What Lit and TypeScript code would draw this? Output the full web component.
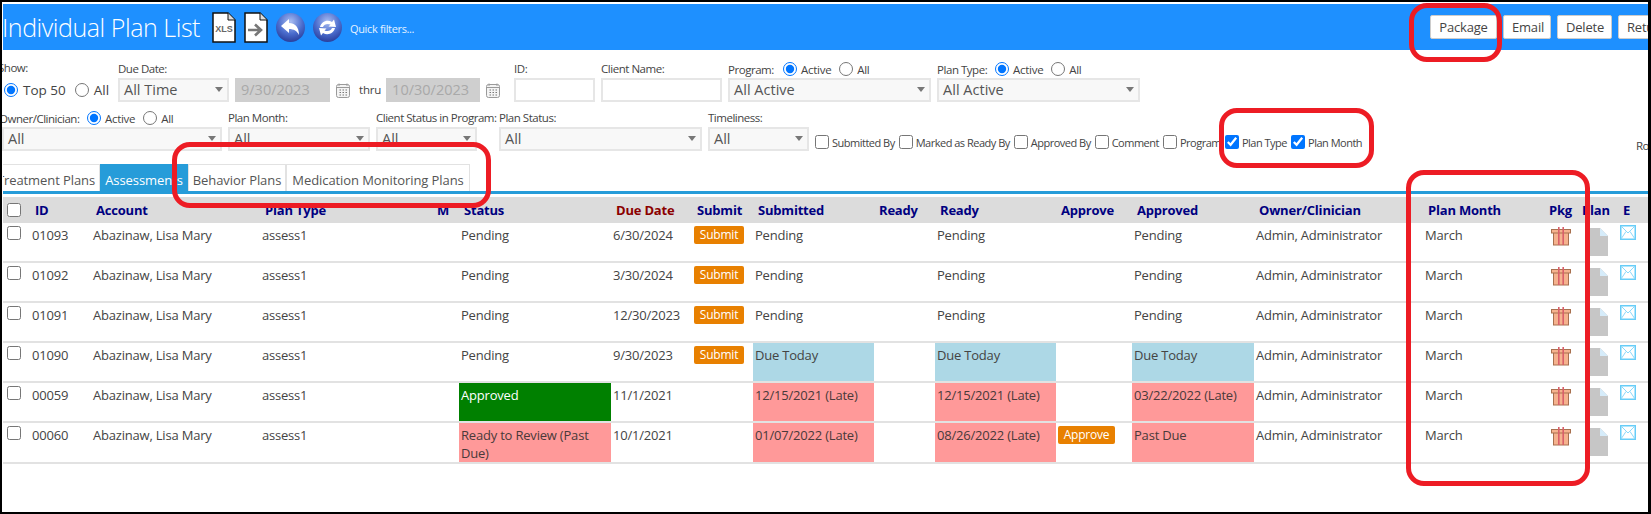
import { LitElement, html, css, svg } from 'lit';
import { customElement } from 'lit/decorators.js';

const giftIcon = svg`<svg class="gift" width="20" height="20" viewBox="0 0 20 20">
  <rect x="2.5" y="6.5" width="15" height="12.5" fill="#f5b28e" stroke="#a8704f"/>
  <rect x="0.5" y="3.5" width="19" height="3.5" fill="#f5b28e" stroke="#a8704f"/>
  <rect x="7" y="1" width="1.6" height="18" fill="#d9606a"/>
  <rect x="11.4" y="1" width="1.6" height="18" fill="#d9606a"/>
</svg>`;

const planIcon = svg`<svg class="doc" width="22" height="28" viewBox="0 0 22 28">
  <path d="M0 0H14L22 8V28H0Z" fill="#c6c6c6"/>
  <path d="M14 0L22 8H14Z" fill="#d6ecfa"/>
</svg>`;

const mailIcon = svg`<svg class="mail" width="16" height="15" viewBox="0 0 16 15">
  <rect x="0.75" y="0.75" width="14.5" height="13.5" fill="#fff" stroke="#67cdf8" stroke-width="1.5"/>
  <path d="M1 1L8 8L15 1M1 14L6 6.5M15 14L10 6.5" fill="none" stroke="#8bd9fa"/>
</svg>`;

const calendarIcon = svg`<svg class="cal" width="14" height="15" viewBox="0 0 14 15">
  <rect x="0.5" y="1.5" width="13" height="13" rx="2" fill="#f4f4f4" stroke="#9a9a9a"/>
  <path d="M3 0.5V3M11 0.5V3M1 4.5H13" stroke="#9a9a9a"/>
  <path d="M3.5 7H5M6.5 7H8M9.5 7H11M3.5 9.5H5M6.5 9.5H8M9.5 9.5H11M3.5 12H5M6.5 12H8M9.5 12H11" stroke="#777"/>
</svg>`;

const xlsIcon = svg`<svg width="24" height="31" viewBox="0 0 24 31">
  <path d="M1 1H16L23 8V30H1Z" fill="#fff" stroke="#111" stroke-width="1.5"/>
  <path d="M16 1V8H23" fill="#ddd" stroke="#111"/>
  <text x="12" y="20" text-anchor="middle" font-family="Liberation Sans, sans-serif" font-size="9" font-weight="700" fill="#666">XLS</text>
</svg>`;

const exportIcon = svg`<svg width="24" height="31" viewBox="0 0 24 31">
  <path d="M1 1H16L23 8V30H1Z" fill="#fff" stroke="#111" stroke-width="1.5"/>
  <path d="M16 1V8H23" fill="#ddd" stroke="#111"/>
  <path d="M4 18H15M11 12.5L17 18L11 23.5" fill="none" stroke="#777" stroke-width="2.6"/>
</svg>`;

const orbDefs = svg`<defs><radialGradient id="orb" cx="50%" cy="30%" r="70%">
  <stop offset="0" stop-color="#a9bdf2"/><stop offset="0.6" stop-color="#4a6ccd"/><stop offset="1" stop-color="#2a3f9c"/>
</radialGradient></defs>`;

const backIcon = svg`<svg width="29" height="29" viewBox="0 0 29 29">${orbDefs}
  <circle cx="14.5" cy="14.5" r="14.5" fill="url(#orb)"/>
  <path d="M5 13L13 6V10C19 10 23 14 23 22C21 18 18 16 13 16V20Z" fill="#fff"/>
</svg>`;

const refreshIcon = svg`<svg width="29" height="29" viewBox="0 0 29 29">
  <circle cx="14.5" cy="14.5" r="14.5" fill="url(#orb)"/>
  <path d="M7 14C8 9 14 6 19 9L21 6.5L23 14L15.5 13.5L17.5 11.5C14 10 11 11.5 10 14Z" fill="#fff"/>
  <path d="M22 15C21 20 15 23 10 20L8 22.5L6 15L13.5 15.5L11.5 17.5C15 19 18 17.5 19 15Z" fill="#fff"/>
</svg>`;

interface PlanRow {
  id: string;
  due: string;
  status: string;
  statusClass?: string;
  canSubmit?: boolean;
  canApprove?: boolean;
  submitted: string;
  ready: string;
  approved: string;
  approvedClass?: string;
  submittedClass?: string;
  readyClass?: string;
}

const rows: PlanRow[] = [
  { id: '01093', due: '6/30/2024', status: 'Pending', canSubmit: true, submitted: 'Pending', ready: 'Pending', approved: 'Pending' },
  { id: '01092', due: '3/30/2024', status: 'Pending', canSubmit: true, submitted: 'Pending', ready: 'Pending', approved: 'Pending' },
  { id: '01091', due: '12/30/2023', status: 'Pending', canSubmit: true, submitted: 'Pending', ready: 'Pending', approved: 'Pending' },
  { id: '01090', due: '9/30/2023', status: 'Pending', canSubmit: true, submitted: 'Due Today', ready: 'Due Today', approved: 'Due Today', submittedClass: 'today', readyClass: 'today', approvedClass: 'today' },
  { id: '00059', due: '11/1/2021', status: 'Approved', statusClass: 'ok', submitted: '12/15/2021 (Late)', ready: '12/15/2021 (Late)', approved: '03/22/2022 (Late)', submittedClass: 'late', readyClass: 'late', approvedClass: 'late' },
  { id: '00060', due: '10/1/2021', status: 'Ready to Review (Past Due)', statusClass: 'late', canApprove: true, submitted: '01/07/2022 (Late)', ready: '08/26/2022 (Late)', approved: 'Past Due', submittedClass: 'late', readyClass: 'late', approvedClass: 'late' },
];

const columns = ['check', 'id', 'account', 'type', 'm', 'status', 'due', 'submit', 'submitted', 'ready1', 'ready2', 'approve', 'approved', 'owner', 'month', 'pkg', 'plan', 'email'];

@customElement('app-root')
export class AppRoot extends LitElement {
  static styles = css`
    :host {
      display: block;
      position: relative;
      width: 1651px;
      height: 514px;
      font-family: "Open Sans", "Noto Sans", sans-serif;
      color: #444;
      background: #000;
    }

    .Frame {
      box-sizing: border-box;
      position: absolute;
      left: 2px;
      top: 2px;
      width: 1646px;
      height: 510px;
      background: #fff;
      overflow: hidden;
    }

    .Head {
      display: flex;
      align-items: center;
      height: 46px;
      margin: 2px 0 0 1px;
      background: #1e90ff;
    }

    .Head-left {
      flex: 0 0 1427px;
      display: flex;
      align-items: center;
    }

    .Title {
      margin: 0 0 0 -1px;
      width: 210px;
      font-size: 25px;
      font-weight: 300;
      letter-spacing: -0.45px;
      color: #fff;
      white-space: nowrap;
    }

    .Icons {
      display: flex;
      align-items: center;
      gap: 8px;
      margin-right: 8px;
    }

    .Icons svg { display: block; }

    .Quick {
      font-size: 11px;
      letter-spacing: -0.35px;
      color: #e3f1ff;
      padding-top: 3px;
    }

    .Actions {
      display: flex;
      gap: 6px;
      flex: none;
    }

    .Btn {
      box-sizing: border-box;
      height: 24px;
      padding: 0 8px;
      background: #fff;
      border: 1px solid #ccc;
      border-radius: 2px;
      font: 13px "Open Sans", sans-serif;
      letter-spacing: -0.2px;
      color: #444;
    }

    .Package { width: 67px; }
    .Email { width: 48px; }
    .Delete { width: 55px; }
    .Return { width: 70px; text-align: left; }

    .Filters {
      height: 114px;
      padding-top: 10px;
      box-sizing: border-box;
      font-size: 11.5px;
      letter-spacing: -0.48px;
    }

    .Line {
      display: flex;
      align-items: flex-end;
      gap: 6px;
      height: 42px;
    }

    .Line + .Line { margin-top: 7px; }

    .Field {
      display: flex;
      flex-direction: column;
      gap: 1px;
    }

    .Field > label, .Cap {
      line-height: 16px;
      white-space: nowrap;
      color: #444;
    }

    .Show { width: 108px; margin-left: 2px; }
    .Show > label { margin-left: -6px; margin-bottom: 1px; }
    .Show .Top { font-size: 13.5px; letter-spacing: 0; }

    .Radios {
      display: flex;
      align-items: center;
      gap: 5px;
      height: 24px;
      white-space: nowrap;
    }

    .Cap-row {
      display: flex;
      align-items: center;
      height: 16px;
      gap: 4px;
      white-space: nowrap;
      letter-spacing: -0.3px;
    }

    .Cap-row label { flex: none; margin-right: 1px; letter-spacing: -0.48px; }
    .Cap-program { width: 50px; }
    .Cap-type { width: 53px; }
    .Cap-owner { width: 83px; margin-left: -3px; }

    input[type="radio"] {
      width: 14px;
      height: 14px;
      margin: 0;
      flex: none;
    }

    input[type="radio"] + span { margin-right: 4px; }

    .Select, .Text {
      box-sizing: border-box;
      height: 24px;
      border: 2px solid #e6e6e6;
      background: #f8f8f8;
      font-size: 14.5px;
      letter-spacing: 0;
      line-height: 20px;
      padding-left: 4px;
      color: #555;
      position: relative;
    }

    .Select::after {
      content: "";
      position: absolute;
      right: 4px;
      top: 7px;
      border-left: 4px solid transparent;
      border-right: 4px solid transparent;
      border-top: 5px solid #777;
    }

    .Text { background: #fff; }
    .Off { background: #cfcfcf; border-color: #cfcfcf; color: #a9a9a9; padding-left: 4px; }

    .w111 { width: 111px; }
    .w95 { width: 95px; }
    .w94 { width: 94px; }
    .w81 { width: 81px; }
    .w121 { width: 121px; }
    .w203 { width: 203px; }
    .w220 { width: 220px; }
    .w142 { width: 142px; }
    .w101 { width: 101px; }

    .Cal { padding-bottom: 4px; }
    .cal { display: block; }
    .Thru { margin: 0 -1px 4px 3px; line-height: 16px; letter-spacing: -0.2px; }
    .IdField { margin-left: 8px; }

    .ClientStatus { width: 117px; }

    .Checks {
      display: flex;
      align-items: center;
      gap: 3px;
      height: 24px;
      margin: 0 0 -3px -1px;
      white-space: nowrap;
      font-size: 11px;
      letter-spacing: -0.5px;
    }

    .Checks input {
      width: 14px;
      height: 14px;
      margin: 0 0 0 1px;
      flex: none;
    }

    .Rows {
      position: absolute;
      left: 1634px;
      top: 136px;
      font-size: 11.5px;
    }

    .Tabs {
      display: flex;
      height: 27px;
      margin-left: 1px;
      border-bottom: 3px solid #269cd9;
    }

    .Tab {
      box-sizing: border-box;
      height: 27px;
      padding-top: 2px;
      line-height: 27px;
      text-align: center;
      font-size: 13px;
      letter-spacing: -0.08px;
      white-space: nowrap;
      background: #fff;
      border: 1px solid #e2e2e2;
      border-bottom: none;
      color: #555;
      overflow: hidden;
    }

    .Tab-t { width: 97px; border-left: none; text-indent: -10px; }
    .Tab-a { width: 88px; background: #269cd9; border-color: #269cd9; color: #fff; }
    .Tab-b { width: 98px; }
    .Tab-m { width: 184px; }

    table {
      margin: 3px 0 0 1px;
      width: 1645px;
      table-layout: fixed;
      border-collapse: collapse;
      font-size: 13px;
      letter-spacing: -0.2px;
    }

    col.check { width: 27px; }
    col.id { width: 61px; }
    col.account { width: 169px; }
    col.type { width: 172px; }
    col.m { width: 27px; }
    col.status { width: 152px; }
    col.due { width: 81px; }
    col.submit { width: 61px; }
    col.submitted { width: 121px; }
    col.ready1 { width: 61px; }
    col.ready2 { width: 121px; }
    col.approve { width: 76px; }
    col.approved { width: 122px; }
    col.owner { width: 169px; }
    col.month { width: 124px; }
    col.pkg { width: 35px; }
    col.plan { width: 36px; }
    col.email { width: 30px; }

    th {
      height: 26px;
      padding: 0 0 0 5px;
      background: #dcdcdc;
      color: #000080;
      font-size: 13px;
      font-weight: 700;
      text-align: left;
      white-space: nowrap;
      overflow: hidden;
    }

    th.Due-head { color: #8b0000; }
    th.Tight { padding-left: 2px; }
    th.Flush { padding-left: 0; }

    td {
      padding: 3px 2px 0;
      box-sizing: content-box;
      vertical-align: top;
      line-height: 19px;
      border-bottom: 2px solid #e2e2e2;
      color: #444;
      overflow: hidden;
    }

    tbody tr td { height: 35px; }
    tr.Tall td { line-height: 18px; height: 36px; }

    td.NoPad { padding-left: 0; padding-right: 0; }
    td input { width: 14px; height: 14px; margin: 0 0 0 4px; display: block; }

    td.today { background: #add8e6; }
    td.late { background: #ff9999; color: #4a3a3a; }
    td.ok { background: #008000; color: #fff; }

    .Act {
      display: block;
      box-sizing: border-box;
      height: 18px;
      padding: 0;
      border: none;
      border-radius: 2px;
      background: #e88000;
      color: #fff;
      font: 12px/18px "Open Sans", sans-serif;
      letter-spacing: -0.2px;
      white-space: nowrap;
    }

    .Sub { width: 50px; }
    .App { width: 57px; }

    th input { width: 14px; height: 14px; margin: 0 0 0 2px; display: block; }

    td svg { display: block; }
    .gift { margin: 0 0 0 4px; }
    .doc { margin: 2px 0 0 4px; }
    .mail { margin: -1px 0 0 2px; }

    .Mark {
      position: absolute;
      box-sizing: border-box;
      border: 5px solid #ed1c24;
      border-radius: 18px;
      pointer-events: none;
    }

    .Mark-package { left: 1409px; top: 3px; width: 93px; height: 59px; }
    .Mark-tabs { left: 172px; top: 142px; width: 319px; height: 66px; }
    .Mark-checks { left: 1219px; top: 108px; width: 155px; height: 60px; }
    .Mark-month { left: 1406px; top: 170px; width: 184px; height: 316px; }
  `;

  private renderRow(row: PlanRow) {
    return html`
      <tr class=${row.id === '00060' ? 'Tall' : ''}>
        <td class="NoPad"><input type="checkbox" /></td>
        <td>${row.id}</td>
        <td>Abazinaw, Lisa Mary</td>
        <td>assess1</td>
        <td></td>
        <td class=${row.statusClass ?? ''}>${row.status}</td>
        <td>${row.due}</td>
        <td>${row.canSubmit ? html`<button class="Act Sub">Submit</button>` : ''}</td>
        <td class=${row.submittedClass ?? ''}>${row.submitted}</td>
        <td></td>
        <td class=${row.readyClass ?? ''}>${row.ready}</td>
        <td>${row.canApprove ? html`<button class="Act App">Approve</button>` : ''}</td>
        <td class=${row.approvedClass ?? ''}>${row.approved}</td>
        <td>Admin, Administrator</td>
        <td>March</td>
        <td class="NoPad">${giftIcon}</td>
        <td class="NoPad">${planIcon}</td>
        <td class="NoPad">${mailIcon}</td>
      </tr>
    `;
  }

  render() {
    return html`
      <div class="Frame">
        <header class="Head">
          <div class="Head-left">
            <h1 class="Title">Individual Plan List</h1>
            <div class="Icons">
              ${xlsIcon}${exportIcon}${backIcon}${refreshIcon}
            </div>
            <span class="Quick">Quick filters...</span>
          </div>
          <div class="Actions">
            <button class="Btn Package">Package</button>
            <button class="Btn Email">Email</button>
            <button class="Btn Delete">Delete</button>
            <button class="Btn Return">Return</button>
          </div>
        </header>

        <section class="Filters">
          <div class="Line">
            <div class="Field Show">
              <label>Show:</label>
              <div class="Radios Top">
                <input type="radio" name="show" checked /><span>Top 50</span>
                <input type="radio" name="show" /><span>All</span>
              </div>
            </div>
            <div class="Field"><label>Due Date:</label><div class="Select w111">All Time</div></div>
            <div class="Text Off w95">9/30/2023</div>
            <div class="Cal">${calendarIcon}</div>
            <span class="Thru">thru</span>
            <div class="Text Off w94">10/30/2023</div>
            <div class="Cal">${calendarIcon}</div>
            <div class="Field IdField"><label>ID:</label><div class="Text w81"></div></div>
            <div class="Field"><label>Client Name:</label><div class="Text w121"></div></div>
            <div class="Field">
              <div class="Cap-row">
                <label class="Cap-program">Program:</label>
                <input type="radio" name="program" checked /><span>Active</span>
                <input type="radio" name="program" /><span>All</span>
              </div>
              <div class="Select w203">All Active</div>
            </div>
            <div class="Field">
              <div class="Cap-row">
                <label class="Cap-type">Plan Type:</label>
                <input type="radio" name="type" checked /><span>Active</span>
                <input type="radio" name="type" /><span>All</span>
              </div>
              <div class="Select w203">All Active</div>
            </div>
          </div>

          <div class="Line">
            <div class="Field">
              <div class="Cap-row">
                <label class="Cap-owner">Owner/Clinician:</label>
                <input type="radio" name="owner" checked /><span>Active</span>
                <input type="radio" name="owner" /><span>All</span>
              </div>
              <div class="Select w220">All</div>
            </div>
            <div class="Field"><label>Plan Month:</label><div class="Select w142">All</div></div>
            <div class="Field ClientStatus"><label>Client Status in Program:</label><div class="Select w101">All</div></div>
            <div class="Field"><label>Plan Status:</label><div class="Select w203">All</div></div>
            <div class="Field"><label>Timeliness:</label><div class="Select w101">All</div></div>
            <div class="Checks">
              <input type="checkbox" /><span>Submitted By</span>
              <input type="checkbox" /><span>Marked as Ready By</span>
              <input type="checkbox" /><span>Approved By</span>
              <input type="checkbox" /><span>Comment</span>
              <input type="checkbox" /><span>Program</span>
              <input type="checkbox" checked /><span>Plan Type</span>
              <input type="checkbox" checked /><span>Plan Month</span>
            </div>
          </div>
          <span class="Rows">Rows</span>
        </section>

        <nav class="Tabs">
          <div class="Tab Tab-t">Treatment Plans</div>
          <div class="Tab Tab-a">Assessments</div>
          <div class="Tab Tab-b">Behavior Plans</div>
          <div class="Tab Tab-m">Medication Monitoring Plans</div>
        </nav>

        <table>
          <colgroup>${columns.map((c) => html`<col class=${c} />`)}</colgroup>
          <thead>
            <tr>
              <th class="Tight"><input type="checkbox" /></th>
              <th>ID</th>
              <th>Account</th>
              <th>Plan Type</th>
              <th>M</th>
              <th>Status</th>
              <th class="Due-head">Due Date</th>
              <th>Submit</th>
              <th>Submitted</th>
              <th>Ready</th>
              <th>Ready</th>
              <th>Approve</th>
              <th>Approved</th>
              <th>Owner/Clinician</th>
              <th>Plan Month</th>
              <th class="Tight">Pkg</th>
              <th class="Flush">Plan</th>
              <th>E</th>
            </tr>
          </thead>
          <tbody>${rows.map((r) => this.renderRow(r))}</tbody>
        </table>
      </div>

      <div class="Mark Mark-package"></div>
      <div class="Mark Mark-tabs"></div>
      <div class="Mark Mark-checks"></div>
      <div class="Mark Mark-month"></div>
    `;
  }
}
